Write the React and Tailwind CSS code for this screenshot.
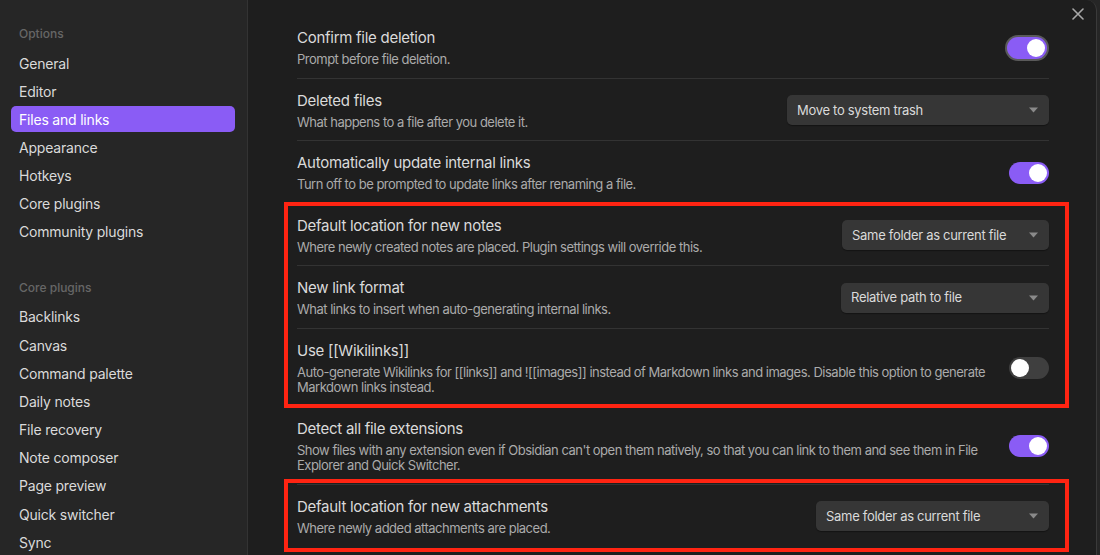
import React from "react";

const optionItems = ["General", "Editor", "Files and links", "Appearance", "Hotkeys", "Core plugins", "Community plugins"];
const pluginItems = ["Backlinks", "Canvas", "Command palette", "Daily notes", "File recovery", "Note composer", "Page preview", "Quick switcher", "Sync"];

function NavItem({ label, active }) {
  return (
    <div
      className={
        "h-[26px] mb-[2.17px] px-[8px] flex items-center rounded-[5px] text-[14px] tracking-[-0.2px] " +
        (active ? "bg-[#8a5cf5] text-white" : "text-[#dadada]")
      }
    >
      {label}
    </div>
  );
}

function Toggle({ on, focused }) {
  return (
    <div className={"shrink-0 rounded-full " + (focused ? "p-[2px] bg-[#5a5a5a]" : "")}>
      <div
        className={
          "w-[40px] h-[22px] rounded-full flex items-center px-[2px] " +
          (on ? "bg-[#8a5cf5] justify-end" : "bg-[#3f3f3f] justify-start")
        }
      >
        <div className="w-[18px] h-[18px] rounded-full bg-white" />
      </div>
    </div>
  );
}

function Dropdown({ value, width }) {
  return (
    <div
      className="shrink-0 h-[30px] rounded-[5px] bg-[#363636] shadow-[0_1px_1px_rgba(0,0,0,0.35)] flex items-center justify-between pl-[10px] pr-[10px] text-[13px] tracking-[-0.3px] text-[#dadada]"
      style={{ width }}
    >
      <span>{value}</span>
      <svg width="9" height="6" viewBox="0 0 9 6" className="mr-[1px]">
        <path d="M0 0.5 L9 0.5 L4.5 5.5 Z" fill="#8a8a8a" />
      </svg>
    </div>
  );
}

function Setting({ name, desc, first, children }) {
  return (
    <div className={"flex items-center gap-[16px] pt-3 pb-[10px] " + (first ? "" : "border-t border-[#333333]")}>
      <div className="flex-1 min-w-0">
        <div className="text-[15px] leading-[19px] tracking-[-0.27px] text-[#dadada]">{name}</div>
        <div className="mt-[5px] text-[13px] leading-[15.5px] tracking-[-0.5px] text-[#ababab]">{desc}</div>
      </div>
      {children}
    </div>
  );
}

export default function App() {
  return (
    <div className="w-[1100px] h-[555px] flex overflow-hidden bg-[#262626] font-['Inter','Liberation_Sans',sans-serif]">
      {/* sidebar */}
      <aside className="w-[248px] shrink-0 h-full bg-[#262626] border-r border-[#333333] pl-[11px] pr-[12px] pt-[26px]">
        <div className="px-[8px] h-[16px] leading-[16px] text-[12px] font-medium text-[#666666] mb-[8px]">Options</div>
        {optionItems.map((item) => (
          <NavItem key={item} label={item} active={item === "Files and links"} />
        ))}
        <div className="px-[8px] h-[16px] leading-[16px] text-[12px] font-medium text-[#666666] mt-[35px] mb-[8px]">Core plugins</div>
        {pluginItems.map((item) => (
          <NavItem key={item} label={item} />
        ))}
      </aside>

      {/* settings panel */}
      <main className="relative flex-1 h-full bg-[#1e1e1e] border-r border-[#3a3a3a] rounded-tr-[10px] pl-[49px] pr-[47px] pt-[16px]">
        <button className="absolute top-[7px] right-[12px] w-[13px] h-[13px] flex items-center justify-center">
          <svg width="12" height="12" viewBox="0 0 12 12">
            <path d="M1 1 L11 11 M11 1 L1 11" stroke="#a8a8a8" strokeWidth="1.6" strokeLinecap="round" />
          </svg>
        </button>

        <Setting first name="Confirm file deletion" desc="Prompt before file deletion.">
          <Toggle on focused />
        </Setting>
        <Setting name="Deleted files" desc="What happens to a file after you delete it.">
          <Dropdown value="Move to system trash" width={262} />
        </Setting>
        <Setting name="Automatically update internal links" desc="Turn off to be prompted to update links after renaming a file.">
          <Toggle on />
        </Setting>
        <Setting name="Default location for new notes" desc="Where newly created notes are placed. Plugin settings will override this.">
          <Dropdown value="Same folder as current file" width={207} />
        </Setting>
        <Setting name="New link format" desc="What links to insert when auto-generating internal links.">
          <Dropdown value="Relative path to file" width={208} />
        </Setting>
        <Setting
          name="Use [[Wikilinks]]"
          desc="Auto-generate Wikilinks for [[links]] and ![[images]] instead of Markdown links and images. Disable this option to generate Markdown links instead."
        >
          <Toggle />
        </Setting>
        <Setting
          name="Detect all file extensions"
          desc="Show files with any extension even if Obsidian can't open them natively, so that you can link to them and see them in File Explorer and Quick Switcher."
        >
          <Toggle on />
        </Setting>
        <Setting name="Default location for new attachments" desc="Where newly added attachments are placed.">
          <Dropdown value="Same folder as current file" width={233} />
        </Setting>

        {/* annotation boxes */}
        <div className="absolute left-[36px] top-[202px] w-[785px] h-[206px] border-[4px] border-[#ff2412] pointer-events-none" />
        <div className="absolute left-[36px] top-[479px] w-[785px] h-[73px] border-[4px] border-[#ff2412] pointer-events-none" />
      </main>
      <div className="w-[3px] shrink-0 h-full bg-[#262626]" />
    </div>
  );
}
